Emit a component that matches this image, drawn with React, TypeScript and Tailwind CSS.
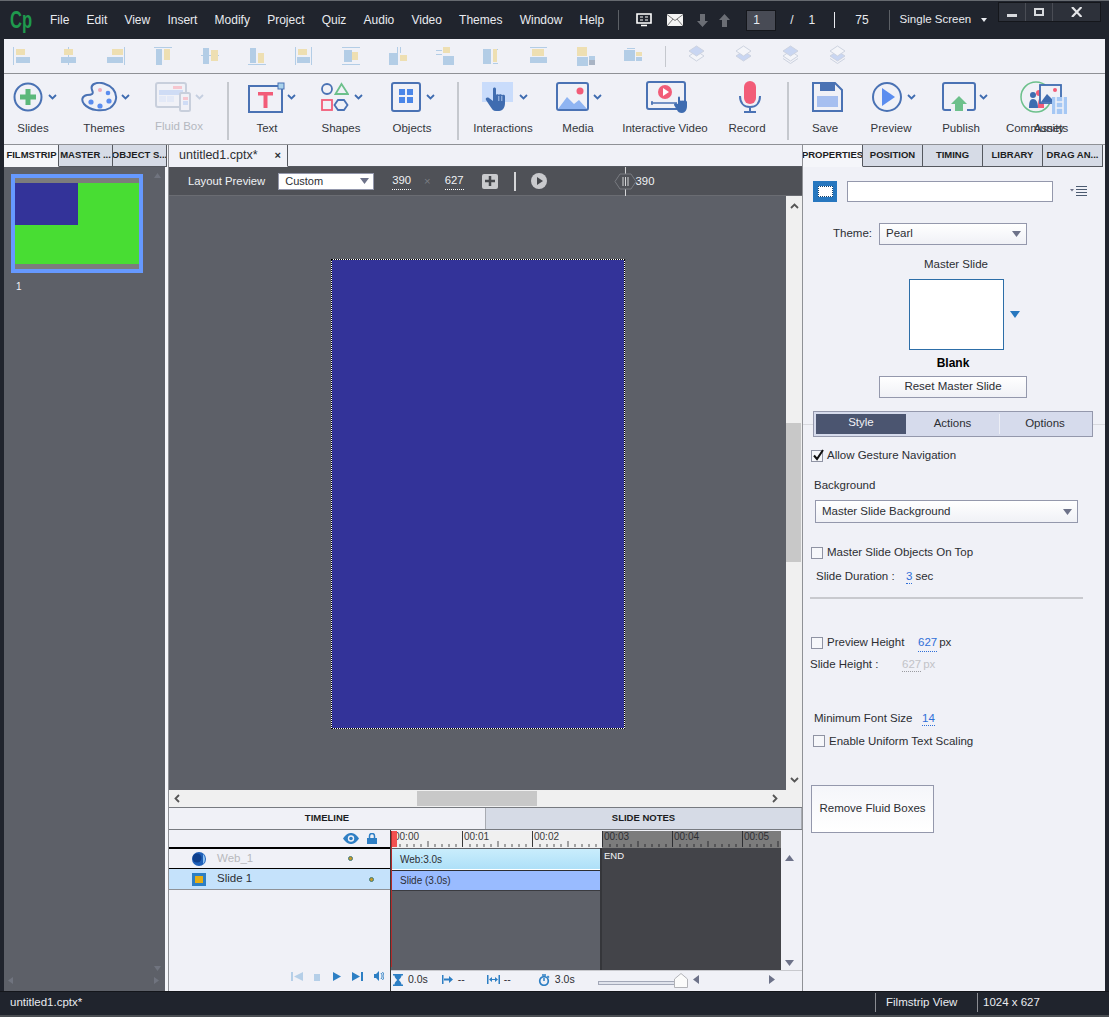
import { ReactNode } from 'react';

const Chevron = ({ faded }: { faded?: boolean }) => (
  <svg width="9" height="6" viewBox="0 0 9 6" className="ml-[6px]">
    <path d="M1 1l3.500 3.500L8 1" fill="none" stroke={faded ? '#c5cfe0' : '#3f6cb0'} strokeWidth="1.8" />
  </svg>
);

const ToolItem = ({ label, width, pad, gap, children, chevron, faded }: { label: string; width: string; pad: string; gap?: string; children: ReactNode; chevron?: boolean; faded?: boolean }) => (
  <div className={`${width} flex flex-col shrink-0`}>
    <div className={`${pad} h-[32px] flex items-center`}>
      {children}
      {chevron && <div className={gap}><Chevron faded={faded} /></div>}
    </div>
    <div className={faded ? 'text-center text-[11.5px] leading-[14px] mt-[6px] text-[#b4b8c0]' : 'text-center text-[11.5px] leading-[14px] mt-[8px] text-[#33363c]'}>{label}</div>
  </div>
);

const Sep = ({ className }: { className: string }) => <div className={`w-[2px] h-[58px] bg-[#c5c8ce] shrink-0 ${className}`} />;

type R = [number, number, number, number, string];
const B = '#b3cde6';
const Y = '#eedfb2';
const alignIcons: R[][] = [
  [[0, 0, 1, 18, B], [3, 2, 9, 6, Y], [3, 10, 14, 6, B]],
  [[8, 0, 1, 18, B], [4, 2, 9, 6, Y], [1, 10, 15, 6, B]],
  [[17, 0, 1, 18, B], [5, 2, 11, 6, Y], [0, 10, 16, 6, B]],
  [[0, 0, 18, 1, B], [2, 2, 6, 16, B], [10, 2, 6, 11, Y]],
  [[0, 8, 18, 1, B], [2, 1, 6, 16, B], [10, 3, 7, 11, Y]],
  [[0, 17, 18, 1, B], [2, 1, 6, 15, B], [10, 6, 6, 10, Y]],
  [[0, 0, 1, 18, B], [16, 0, 1, 18, B], [3, 2, 9, 6, Y], [2, 10, 13, 6, B]],
  [[0, 0, 18, 1, B], [0, 17, 18, 1, B], [2, 3, 8, 12, B], [10, 5, 6, 8, Y]],
  [[8, 0, 1, 6, B], [11, 0, 1, 6, B], [0, 6, 9, 12, B], [11, 8, 7, 6, Y]],
  [[0, 3, 6, 1, B], [0, 7, 6, 1, B], [7, 0, 7, 6, Y], [7, 9, 11, 9, B]],
  [[0, 2, 8, 15, B], [10, 2, 5, 1, B], [10, 2, 4, 13, Y], [10, 16, 5, 1, B]],
  [[2, 2, 12, 7, Y], [0, 10, 17, 6, B], [0, 0, 17, 1, B]],
  [[0, 0, 10, 9, Y], [0, 10, 11, 9, B], [12, 9, 6, 4, B], [12, 13, 6, 5, '#a9b4c4']],
  [[0, 3, 11, 11, B], [3, 1, 8, 1, B], [12, 5, 6, 4, Y], [12, 10, 6, 4, B]],
];

const AlignIcon = ({ rects }: { rects: R[] }) => (
  <svg width="18" height="19" viewBox="0 0 18 19">
    {rects.map((r, i) => (
      <rect key={i} x={r[0]} y={r[1]} width={r[2]} height={r[3]} fill={r[4]} />
    ))}
  </svg>
);

const LayerIcon = ({ kind }: { kind: number }) => {
  const fillA = kind === 0 || kind === 2 ? '#c9d6f2' : '#f4f5f9';
  const fillB = kind === 1 || kind === 3 ? '#c9d6f2' : '#f4f5f9';
  return (
    <svg width="17" height="22" viewBox="0 0 17 22">
      {kind > 1 && <path d="M1 13.500l7.500 5 7.500-5" fill="none" stroke="#cdd3e0" />}
      <path d="M8.500 6L16 11l-7.500 5L1 11z" fill={fillB} stroke="#cdd3e0" />
      <path d="M8.500 1L16 6l-7.500 5L1 6z" fill={fillA} stroke="#cdd3e0" />
    </svg>
  );
};

const Check = ({ checked }: { checked?: boolean }) => (
  <div className="relative w-[12px] h-[12px] border border-[#8f93a3] bg-[#f6f7fa] shrink-0">
    {checked && (
      <svg width="14" height="13" viewBox="0 0 14 13" className="absolute left-0 top-[-2px]">
        <path d="M2 6.500l3 3.500 6-9" fill="none" stroke="#111" strokeWidth="2" />
      </svg>
    )}
  </div>
);

const SelectBox = ({ label, className }: { label: string; className: string }) => (
  <div className={`flex items-center justify-between border border-[#9498ac] bg-gradient-to-b from-white to-[#f0f1f6] ${className}`}>
    <span className="pl-[6px] text-[11.5px] text-[#2c2e33]">{label}</span>
    <svg width="9" height="6" viewBox="0 0 9 6" className="mr-[5px]"><path d="M0 0h9L4.500 6z" fill="#6d7289" /></svg>
  </div>
);

const Tab = ({ label, width, active }: { label: string; width: string; active?: boolean }) => (
  <div className={`${width} h-[22px] shrink-0 flex items-center justify-center overflow-hidden whitespace-nowrap text-[9.500px] font-bold border-r border-[#55585f] border-b ${active ? 'bg-[#f5f6fa] text-[#1c1d22] border-b-[#f5f6fa]' : 'bg-[#d6dbe6] text-[#1c1d22] border-b-[#55585f]'}`}>
    {label}
  </div>
);

const Link = ({ children, grey }: { children: ReactNode; grey?: boolean }) => (
  <span className={`border-b border-dotted ${grey ? 'text-[#c2c3c8] border-[#9a9ba0]' : 'text-[#2f6fd8] border-[#2f6fd8]'}`}>{children}</span>
);

const RulerCell = ({ label, dark }: { label: string; dark?: boolean }) => (
  <div className={`relative w-[70px] h-[16px] shrink-0 border-l ${dark ? 'border-[#2e2f33] text-[#2e2f33]' : 'border-[#3a3a3a] text-[#3a3a3a]'}`}>
    <span className="absolute left-[1px] top-[-1px] text-[10px] leading-[13px]">{label}</span>
    <svg width="70" height="16" viewBox="0 0 70 16" className="absolute left-0 top-0">
      {[7, 14, 21, 28, 35, 42, 49, 56, 63].map((x) => (
        <line key={x} x1={x} x2={x} y1={x === 35 ? 10 : 13} y2="16" stroke={dark ? '#2e2f33' : '#555'} />
      ))}
    </svg>
  </div>
);

const App = () => {
  const menus = ['File', 'Edit', 'View', 'Insert', 'Modify', 'Project', 'Quiz', 'Audio', 'Video', 'Themes', 'Window', 'Help'];

  return (
    <div className="relative w-[1109px] h-[1017px] overflow-hidden bg-[#20242d] flex flex-col font-['Liberation_Sans',sans-serif]">
      {/* Title bar */}
      <div className="h-[39px] shrink-0 flex items-center border-t border-[#666a70] text-[#e9ebf0] text-[12px]">
        <span className="ml-[10px] w-[40px] text-[23px] leading-[23px] font-bold text-[#1f9a4d] shrink-0 origin-left scale-x-[0.72]">Cp</span>
        <div className="flex gap-[17.200px]">
          {menus.map((m) => (
            <span key={m}>{m}</span>
          ))}
        </div>
        <div className="ml-[14px] w-px h-[20px] bg-[#5c6066]" />
        <svg width="16" height="14" viewBox="0 0 16 14" className="ml-[17px]">
          <path d="M1 1h14v9H1zM5 12.500h6" fill="none" stroke="#fff" strokeWidth="1.600" />
          <path d="M4 4h3M4 7h3M9 4h3M9 7h3" stroke="#fff" />
        </svg>
        <svg width="16" height="12" viewBox="0 0 16 12" className="ml-[15px]">
          <path d="M0 0h16v12H0z" fill="#f4f4f4" />
          <path d="M0 .5l8 6 8-6M0 12l6-7M16 12l-6-7" fill="none" stroke="#777" />
        </svg>
        <svg width="11" height="13" viewBox="0 0 11 13" className="ml-[14px]"><path d="M3 0h5v7h3l-5.500 6L0 7h3z" fill="#6b6e75" /></svg>
        <svg width="11" height="13" viewBox="0 0 11 13" className="ml-[11px]"><path d="M3 13h5V6h3L5.500 0 0 6h3z" fill="#6b6e75" /></svg>
        <div className="ml-[16px] w-[30px] h-[21px] bg-[#484b55] border border-[#15171c] flex items-center pl-[6px]">1</div>
        <span className="ml-[14px]">/</span>
        <span className="ml-[15px]">1</span>
        <div className="ml-[19px] w-px h-[16px] bg-[#e9ebf0]" />
        <span className="ml-[20px]">75</span>
        <div className="ml-[20px] w-px h-[20px] bg-[#5c6066]" />
        <span className="ml-[10px] text-[11.500px]">Single Screen</span>
        <svg width="6" height="4" viewBox="0 0 6 4" className="ml-[10px]"><path d="M0 0h6L3 4z" fill="#e9ebf0" /></svg>
      </div>

      {/* Window buttons */}
      <div className="absolute left-[998px] top-[2px] w-[103px] h-[20px] flex bg-[#2d313a] border border-[#14161b]">
        <div className="w-[27px] border-r border-[#4a4d55] flex items-center justify-center">
          <div className="w-[10px] h-[3px] mt-[6px] bg-[#d8dade]" />
        </div>
        <div className="w-[27px] border-r border-[#4a4d55] flex items-center justify-center">
          <div className="w-[10px] h-[8px] border-2 border-[#d8dade]" />
        </div>
        <div className="flex-1 flex items-center justify-center">
          <svg width="11" height="10" viewBox="0 0 11 10"><path d="M1 0l9.500 10M10.500 0L1 10" stroke="#e4e5e8" strokeWidth="2.200" /></svg>
        </div>
      </div>

      <div className="flex-1 min-h-0 mx-[4px] flex flex-col bg-[#f0f1f7]">
        {/* Align toolbar */}
        <div className="h-[35px] shrink-0 flex items-center border-b border-[#8f9196] pl-[9px]">
          {alignIcons.map((rects, i) => (
            <div key={i} className="w-[47px] shrink-0 flex">
              <AlignIcon rects={rects} />
            </div>
          ))}
          <div className="w-px h-[21px] bg-[#c5c8ce] ml-[-6px] mr-[22px]" />
          {[0, 1, 2, 3].map((k) => (
            <div key={k} className="w-[47px] shrink-0 flex">
              <LayerIcon kind={k} />
            </div>
          ))}
        </div>

        {/* Main toolbar */}
        <div className="relative h-[71px] shrink-0 flex items-start pt-[7px] border-b border-[#8f9196]">
          <ToolItem label="Slides" width="w-[58px]" pad="pl-[9px]" chevron gap="ml-[-1px]">
            <svg width="30" height="30" viewBox="0 0 30 30">
              <circle cx="15" cy="15" r="13.500" fill="none" stroke="#4a72b4" strokeWidth="2" />
              <path d="M15 7v16M7 15h16" stroke="#5cb87a" strokeWidth="5" />
            </svg>
          </ToolItem>
          <ToolItem label="Themes" width="w-[84px]" pad="pl-[19px]" chevron gap="ml-[-3px]">
            <svg width="37" height="30" viewBox="0 0 37 30">
              <path d="M13 2c6-3 14 0 19 5 5 6 4 14-3 19-7 4-20 3-26-4-3-4-2-8 3-9 5 0 7-1 5-5-1-3 0-5 2-6z" fill="none" stroke="#4a72b4" strokeWidth="2" />
              <circle cx="10" cy="20" r="2.600" fill="#5b8def" />
              <circle cx="19" cy="24" r="2.600" fill="#5b8def" />
              <circle cx="28" cy="19" r="2.600" fill="#5b8def" />
              <circle cx="27" cy="11" r="2.300" fill="#5b8def" />
              <circle cx="19" cy="8" r="2" fill="#f0a8b8" />
            </svg>
          </ToolItem>
          <ToolItem label="Fluid Box" width="w-[66px]" pad="pl-[9px]" chevron faded gap="ml-[-2px]">
            <svg width="36" height="30" viewBox="0 0 36 30">
              <rect x="1" y="1" width="30" height="24" rx="2" fill="none" stroke="#c8cfdc" strokeWidth="2" />
              <rect x="4" y="8" width="24" height="5" fill="#cfdcf5" />
              <rect x="18" y="4" width="9" height="3" fill="#f6c6cf" />
              <rect x="4" y="14" width="7" height="6" fill="#e3e9f7" />
              <rect x="12" y="14" width="7" height="6" fill="#e3e9f7" />
              <rect x="25" y="11" width="10" height="18" rx="1.500" fill="#f0f1f7" stroke="#c8cfdc" strokeWidth="2" />
              <rect x="28" y="15" width="5" height="3" fill="#f6c6cf" />
              <rect x="28" y="19" width="5" height="4" fill="#cfdcf5" />
            </svg>
          </ToolItem>
          <Sep className="ml-[15px] mt-[1px]" />
          <ToolItem label="Text" width="w-[76px]" pad="pl-[19px]" chevron gap="ml-[-4px]">
            <svg width="37" height="31" viewBox="0 0 37 31">
              <rect x="1" y="4" width="33" height="26" fill="none" stroke="#4a72b4" strokeWidth="2" />
              <path d="M10 10h15v3.500h-5.500V26h-4V13.500H10z" fill="#f25c78" />
              <rect x="30" y="1" width="6" height="6" fill="#a9d2ec" stroke="#4a72b4" />
            </svg>
          </ToolItem>
          <ToolItem label="Shapes" width="w-[72px]" pad="pl-[16px]" chevron gap="ml-[-1px]">
            <svg width="28" height="30" viewBox="0 0 28 30">
              <circle cx="6" cy="7" r="5" fill="none" stroke="#4a72b4" strokeWidth="1.800" />
              <path d="M14.500 12L20.500 2 27 12z" fill="none" stroke="#6cc08b" strokeWidth="1.800" />
              <rect x="1" y="18" width="10" height="10" fill="none" stroke="#f25c78" strokeWidth="1.800" />
              <path d="M17 18h6l3.500 5-3.500 5h-6l-3.500-5z" fill="none" stroke="#4a72b4" strokeWidth="1.800" />
            </svg>
          </ToolItem>
          <ToolItem label="Objects" width="w-[70px]" pad="pl-[14px]" chevron gap="ml-[-1px]">
            <svg width="30" height="30" viewBox="0 0 30 30">
              <rect x="1" y="1" width="28" height="28" rx="2" fill="none" stroke="#4a72b4" strokeWidth="2" />
              <rect x="8" y="7" width="6" height="6" fill="#4a86e8" />
              <rect x="16" y="7" width="6" height="6" fill="#4a86e8" />
              <rect x="8" y="15" width="6" height="6" fill="#4a86e8" />
              <rect x="16" y="15" width="6" height="6" fill="#4a86e8" />
            </svg>
          </ToolItem>
          <Sep className="ml-[10px] mt-[1px]" />
          <ToolItem label="Interactions" width="w-[88px]" pad="pl-[23px]" chevron>
            <svg width="31" height="30" viewBox="0 0 31 30">
              <rect x="0" y="0" width="31" height="20" fill="#c9dcfb" />
              <path d="M11 7c0-2 3-2 3 0v6c0-1 3-1 3 0 0-1 3-1 3 .5 0-1 3-1 3 .5v7c0 4-2 8-6 8h-3c-3 0-4-2-6-5l-4-6c-1-2 1-3 3-2l4 3z" fill="#3f6cb0" />
              <path d="M16.800 14v5M19.800 14v5" stroke="#c9dcfb" strokeWidth="0.800" />
            </svg>
          </ToolItem>
          <ToolItem label="Media" width="w-[62px]" pad="pl-[9px]" chevron gap="ml-[-2px]">
            <svg width="33" height="30" viewBox="0 0 33 30">
              <rect x="1" y="1" width="31" height="27" rx="2" fill="none" stroke="#4a72b4" strokeWidth="2" />
              <path d="M2 27l9-12 7 7 5-4 8 9z" fill="#8fb4f2" />
              <circle cx="24" cy="9" r="3.500" fill="#f25c78" />
            </svg>
          </ToolItem>
          <ToolItem label="Interactive Video" width="w-[112px]" pad="pl-[37px]">
            <svg width="43" height="32" viewBox="0 0 43 32">
              <rect x="1" y="1" width="38" height="27" rx="2" fill="none" stroke="#4a72b4" strokeWidth="2" />
              <circle cx="19" cy="11" r="7" fill="#f25c78" />
              <path d="M17 7l6 4-6 4z" fill="#fff" />
              <path d="M5 22h26M6 20v4" stroke="#4a72b4" strokeWidth="1.500" />
              <path d="M32 17c0-2 2-2 2 0v3c1-1 2 0 2 0 1-1 2 0 2 0 1-1 3 0 3 1v4c0 4-2 7-5 7s-4-1-5-3l-3-5c0-2 2-2 4-1z" fill="#3f6cb0" />
            </svg>
          </ToolItem>
          <ToolItem label="Record" width="w-[52px]" pad="pl-[18px]">
            <svg width="22" height="32" viewBox="0 0 22 32">
              <rect x="5" y="0" width="12" height="23" rx="6" fill="#f25c78" />
              <path d="M1 15c0 7 4 11 10 11s10-4 10-11M11 26v5M5 31h12" fill="none" stroke="#4a72b4" strokeWidth="2" />
            </svg>
          </ToolItem>
          <Sep className="ml-[14px] mt-[1px]" />
          <ToolItem label="Save" width="w-[72px]" pad="pl-[23px]">
            <svg width="31" height="30" viewBox="0 0 31 30">
              <path d="M1 1h22l7 7v21H1z" fill="none" stroke="#4a72b4" strokeWidth="2" />
              <rect x="8" y="1" width="15" height="8" fill="#4a72b4" />
              <rect x="5" y="14" width="21" height="11" fill="#a6bff0" />
            </svg>
          </ToolItem>
          <ToolItem label="Preview" width="w-[60px]" pad="pl-[10px]" chevron gap="ml-[-2px]">
            <svg width="32" height="30" viewBox="0 0 32 30">
              <circle cx="16" cy="15" r="14" fill="none" stroke="#4a72b4" strokeWidth="2" />
              <path d="M11 6l13 9-13 9z" fill="#5b8def" />
            </svg>
          </ToolItem>
          <ToolItem label="Publish" width="w-[80px]" pad="pl-[21px]" chevron gap="ml-[-3px]">
            <svg width="34" height="30" viewBox="0 0 34 30">
              <path d="M9 28H3a2 2 0 0 1-2-2V3a2 2 0 0 1 2-2h28a2 2 0 0 1 2 2v23a2 2 0 0 1-2 2h-6" fill="none" stroke="#4a72b4" strokeWidth="2" />
              <path d="M17 14l8 8h-4v7h-8v-7H9z" fill="#6cc08b" />
            </svg>
          </ToolItem>
          <ToolItem label="Community" width="w-[68px]" pad="pl-[19px]">
            <svg width="33" height="32" viewBox="0 0 33 32">
              <circle cx="16" cy="16" r="15" fill="none" stroke="#6cc08b" strokeWidth="1.500" />
              <circle cx="19" cy="12" r="3" fill="#f25c78" />
              <circle cx="13" cy="14" r="3" fill="#3f6cb0" />
              <path d="M9 27c0-6 1-9 4-9s5 3 5 9z" fill="#3f6cb0" />
              <path d="M18 27c0-5 0-10 3-10s3 5 3 10z" fill="#f25c78" />
            </svg>
          </ToolItem>
          {/* Assets sits on top of Community in the reference */}
          <div className="absolute left-[1029px] top-[7px] w-[36px]">
            <svg width="29" height="31" viewBox="0 0 29 31" className="ml-[6px] mt-[3px]">
              <rect x="1" y="1" width="21" height="18" fill="#f0f1f7" stroke="#3f6cb0" strokeWidth="1.800" />
              <path d="M2 18l6-8 5 5 3-2 5 5z" fill="#3f6cb0" />
              <circle cx="16" cy="6" r="2" fill="#f25c78" />
              <rect x="13" y="13" width="15" height="17" fill="#a6c8f4" />
              <path d="M17 13v17M24 13v17M17 18h7M17 24h7" stroke="#f0f1f7" strokeWidth="1.500" />
            </svg>
          </div>
          <div className="absolute left-[1029px] top-[47px] w-[36px] text-center text-[11.500px] leading-[14px] text-[#33363c]">Assets</div>
        </div>

        {/* Main columns */}
        <div className="flex-1 min-h-0 flex">
          {/* Filmstrip */}
          <div className="w-[164px] shrink-0 flex flex-col bg-[#f5f6fa]">
            <div className="flex pl-[1px]">
              <Tab label="FILMSTRIP" width="w-[54px]" active />
              <Tab label="MASTER ..." width="w-[54px]" />
              <Tab label="OBJECT S..." width="w-[54px]" />
            </div>
            <div className="relative flex-1 w-[161px] bg-[#5d6068] pt-[7px] pl-[7px]">
              <div className="w-[132px] h-[99px] border-4 border-[#6699ff] bg-[#48dd33] flex flex-col justify-between">
                <div className="h-[5px] bg-[#7c7c7c]" />
                <div className="absolute left-[11px] top-[16px] w-[63px] h-[42px] bg-[#333399]" />
                <div className="h-[5px] bg-[#7c7c7c]" />
              </div>
              <div className="mt-[8px] pl-[5px] text-[10px] leading-[12px] text-[#f0f1f5]">1</div>
              <svg width="7" height="5" viewBox="0 0 7 5" className="absolute left-[150px] top-[6px]"><path d="M0 5h7L3.500 0z" fill="#70747f" /></svg>
              <svg width="7" height="5" viewBox="0 0 7 5" className="absolute left-[150px] bottom-[20px]"><path d="M0 0h7L3.500 5z" fill="#70747f" /></svg>
              <svg width="5" height="7" viewBox="0 0 5 7" className="absolute left-[4px] bottom-[7px]"><path d="M5 0v7L0 3.500z" fill="#70747f" /></svg>
              <svg width="5" height="7" viewBox="0 0 5 7" className="absolute left-[150px] bottom-[7px]"><path d="M0 0v7l5-3.500z" fill="#70747f" /></svg>
            </div>
          </div>

          {/* Stage */}
          <div className="w-[634px] shrink-0 flex flex-col border-l border-[#8f9196]">
            <div className="h-[22px] shrink-0 flex">
              <div className="w-[119px] border-r border-b border-r-[#55585f] border-b-[#f0f1f7] flex items-center pl-[10px] pr-[6px] justify-between text-[12.500px] text-[#2c2e33]">
                <span>untitled1.cptx*</span>
                <span className="text-[11px] font-bold">×</span>
              </div>
              <div className="flex-1 border-b border-[#55585f]" />
            </div>
            <div className="h-[29px] shrink-0 bg-[#4f5157] relative flex items-center text-[11.300px] text-[#f0f1f5] border-b border-[#6a6c72]">
              <span className="ml-[19px]">Layout Preview</span>
              <div className="ml-[13px] w-[96px] h-[17px] flex items-center justify-between border border-[#9498ac] bg-white text-[#2c2e33]">
                <span className="pl-[6px] text-[11px]">Custom</span>
                <svg width="9" height="6" viewBox="0 0 9 6" className="mr-[4px]"><path d="M0 0h9L4.500 6z" fill="#6d7289" /></svg>
              </div>
              <span className="ml-[18px] border-b border-dotted border-white">390</span>
              <span className="ml-[13px] text-[#7b7d83]">×</span>
              <span className="ml-[14px] border-b border-dotted border-white">627</span>
              <div className="ml-[18px] w-[16px] h-[15px] rounded-[2px] bg-[#c9cacd] flex items-center justify-center">
                <svg width="10" height="10" viewBox="0 0 10 10"><path d="M5 0v10M0 5h10" stroke="#45474c" strokeWidth="2.500" /></svg>
              </div>
              <div className="ml-[16px] w-[2px] h-[19px] bg-[#d5d6d8]" />
              <svg width="16" height="16" viewBox="0 0 16 16" className="ml-[15px]">
                <circle cx="8" cy="8" r="8" fill="#c9cacd" />
                <path d="M6 4l6 4-6 4z" fill="#45474c" />
              </svg>
              <svg width="23" height="29" viewBox="0 0 23 29" className="ml-[67px]">
                <path d="M11.500 0v29" stroke="#d5d6d8" />
                <path d="M6 7h11l5 7.500-5 7.500H6L1 14.500z" fill="#4f5157" stroke="#797b81" />
                <path d="M9 10v9M11.500 10v9M14 10v9" stroke="#d5d6d8" />
              </svg>
              <span className="ml-[-1px]">390</span>
            </div>

            {/* Canvas and its scrollbars */}
            <div className="flex-1 min-h-0 flex">
              <div className="flex-1 bg-[#5d6068] pt-[63px] pl-[162px]">
                <div className="w-[294px] h-[470px] bg-white border border-dotted border-black">
                  <div className="w-full h-full bg-[#333399]" />
                </div>
              </div>
              <div className="relative w-[16px] shrink-0 bg-[#f0f0f0] flex flex-col items-center justify-between py-[7px]">
                <svg width="9" height="6" viewBox="0 0 9 6"><path d="M1 5l3.500-3.500L8 5" fill="none" stroke="#555" strokeWidth="1.800" /></svg>
                <div className="absolute left-0 right-px top-[227px] h-[139px] bg-[#c8c8c8]" />
                <svg width="9" height="6" viewBox="0 0 9 6"><path d="M1 1l3.500 3.500L8 1" fill="none" stroke="#555" strokeWidth="1.800" /></svg>
              </div>
            </div>
            <div className="relative h-[17px] shrink-0 bg-[#f0f0f0] flex items-center pl-[5px] pr-[24px] justify-between">
              <svg width="6" height="9" viewBox="0 0 6 9"><path d="M5 1L1.500 4.500 5 8" fill="none" stroke="#555" strokeWidth="1.800" /></svg>
              <div className="absolute left-[248px] top-px bottom-px w-[120px] bg-[#c8c8c8]" />
              <svg width="6" height="9" viewBox="0 0 6 9"><path d="M1 1l3.500 3.500L1 8" fill="none" stroke="#555" strokeWidth="1.800" /></svg>
            </div>

            {/* Timeline */}
            <div className="h-[23px] shrink-0 flex text-[9.500px] font-bold text-[#1c1d22] border-t border-b border-[#777a80]">
              <div className="w-[316px] flex items-center justify-center">TIMELINE</div>
              <div className="flex-1 flex items-center justify-center bg-[#d6dbe6] border-l border-r border-[#a8abb2]">SLIDE NOTES</div>
            </div>
            <div className="h-[161px] shrink-0 flex">
              <div className="w-[221px] shrink-0 flex flex-col">
                <div className="h-[19px] shrink-0 flex items-center justify-end pr-[13px] border-b-2 border-black">
                  <svg width="16" height="11" viewBox="0 0 16 11" className="mr-[8px]">
                    <path d="M0 5.500C3 1 6 0 8 0s5 1 8 5.500C13 10 10 11 8 11s-5-1-8-5.500z" fill="#2f7fc4" />
                    <circle cx="8" cy="5.500" r="3.200" fill="#f0f1f7" />
                    <circle cx="8" cy="5.500" r="1.800" fill="#2f7fc4" />
                  </svg>
                  <svg width="10" height="11" viewBox="0 0 10 11">
                    <path d="M2.500 5V3a2.500 2.500 0 0 1 5 0v2" fill="none" stroke="#2f7fc4" strokeWidth="1.500" />
                    <rect x="0" y="5" width="10" height="6" fill="#2f7fc4" />
                  </svg>
                </div>
                <div className="h-[20px] shrink-0 flex items-center border-b border-black pl-[23px] text-[11.500px] text-[#b8b9bd]">
                  <svg width="14" height="14" viewBox="0 0 14 14">
                    <circle cx="7" cy="7" r="7" fill="#1e5fb8" />
                    <circle cx="5" cy="6" r="4.500" fill="#0e3f8c" />
                    <path d="M11 2a7 7 0 0 1 0 10z" fill="#8fc3f2" />
                  </svg>
                  <span className="ml-[11px]">Web_1</span>
                  <div className="ml-[95px] w-[5px] h-[5px] rounded-full bg-[#c79a26] border border-[#3f7a7a]" />
                </div>
                <div className="h-[21px] shrink-0 flex items-center border-b border-[#8f9196] bg-[#c5e2fb] pl-[23px] text-[11.500px] text-[#2c2e33]">
                  <div className="w-[14px] h-[13px] border-[3px] border-[#2d7fc4] bg-[#e6ad12]" />
                  <span className="ml-[11px]">Slide 1</span>
                  <div className="ml-[117px] w-[5px] h-[5px] rounded-full bg-[#c79a26] border border-[#3f7a7a]" />
                </div>
                <div className="flex-1 flex items-end justify-end pr-[6px] pb-[10px] gap-[11px]">
                  <svg width="12" height="9" viewBox="0 0 12 9"><path d="M0 0h2v9H0zM12 0v9L3 4.500z" fill="#b5cfe8" /></svg>
                  <div className="w-[6px] h-[7px] bg-[#b5cfe8]" />
                  <svg width="8" height="9" viewBox="0 0 8 9" className="ml-[2px]"><path d="M0 0v9l8-4.500z" fill="#2d7fc4" /></svg>
                  <svg width="11" height="9" viewBox="0 0 11 9"><path d="M9 0h2v9H9zM0 0v9l8-4.500z" fill="#2d7fc4" /></svg>
                  <svg width="10" height="10" viewBox="0 0 10 10"><path d="M0 3h2l3-3v10L2 7H0z" fill="#2d7fc4" /><path d="M7 2c1.500 2 1.500 4 0 6M8.500 1c2 3 2 5 0 8" fill="none" stroke="#2d7fc4" /></svg>
                </div>
              </div>

              <div className="flex-1 min-w-0 flex flex-col border-l border-[#3a3a3a]">
                <div className="relative flex-1 min-h-0 flex">
                  <div className="relative w-[390px] shrink-0 flex flex-col">
                    <div className="h-[17px] shrink-0 flex pl-px mt-[1px] overflow-hidden">
                      <div className="flex bg-[#f0f0f0]">
                        <RulerCell label="00:00" />
                        <RulerCell label="00:01" />
                        <RulerCell label="00:02" />
                      </div>
                      <div className="flex bg-[#7c7c7c]">
                        <RulerCell label="00:03" dark />
                        <RulerCell label="00:04" dark />
                        <RulerCell label="00:05" dark />
                      </div>
                    </div>
                    <div className="flex-1 min-h-0 flex">
                      <div className="w-[211px] shrink-0 flex flex-col bg-[#5d6068] border-r-2 border-[#35363a]">
                        <div className="h-[21px] mt-[1px] shrink-0 flex items-center pl-[9px] text-[10px] text-[#2c2e33] bg-gradient-to-b from-[#c9edfc] to-[#aee0f8] border-b border-white">Web:3.0s</div>
                        <div className="h-[21px] shrink-0 flex items-center pl-[9px] text-[10px] text-[#2c2e33] bg-[#99bbff] border-t border-b border-t-[#2c2e33] border-b-[#3a3b40]">Slide (3.0s)</div>
                      </div>
                      <div className="flex-1 bg-[#434449] pl-[2px] pt-[2px] text-[9.500px] leading-[12px] text-[#f4f5f7]">END</div>
                    </div>
                    <div className="absolute left-0 top-[1px] w-[6px] h-[16px] bg-[#f25050]" />
                    <div className="absolute left-0 top-[1px] bottom-[3px] w-px bg-[#b52b2b]" />
                  </div>
                  <div className="flex-1 flex flex-col items-center justify-between pt-[25px] pb-[4px] pr-[4px] bg-[#f0f1f7]">
                    <svg width="9" height="6" viewBox="0 0 9 6"><path d="M0 6h9L4.500 0z" fill="#6d7289" /></svg>
                    <svg width="9" height="6" viewBox="0 0 9 6"><path d="M0 0h9L4.500 6z" fill="#6d7289" /></svg>
                  </div>
                </div>
                <div className="h-[21px] shrink-0 flex items-center pb-[3px] border-t border-[#c8c9ce] text-[10.500px] text-[#2c2e33]">
                  <svg width="10" height="12" viewBox="0 0 10 12" className="ml-[2px]">
                    <path d="M0 0h10v1.500H8.500C8.500 4 6.500 5 5.800 6c.7 1 2.700 2 2.700 4.500H10V12H0v-1.500h1.500C1.500 8 3.500 7 4.200 6c-.7-1-2.700-2-2.700-4.500H0z" fill="#2d7fc4" />
                  </svg>
                  <span className="ml-[5px]">0.0s</span>
                  <svg width="11" height="9" viewBox="0 0 11 9" className="ml-[14px]"><path d="M0 0h1.500v9H0zM2 3.500h5V1l4 3.500L7 8V5.500H2z" fill="#2d7fc4" /></svg>
                  <span className="ml-[5px]">--</span>
                  <svg width="13" height="9" viewBox="0 0 13 9" className="ml-[22px]"><path d="M0 0h1.500v9H0zM11.500 0H13v9h-1.500zM2 4.500L5 2v2h3V2l3 2.500L8 7V5H5v2z" fill="#2d7fc4" /></svg>
                  <span className="ml-[4px]">--</span>
                  <svg width="12" height="12" viewBox="0 0 12 12" className="ml-[27px]">
                    <circle cx="6" cy="7" r="4.300" fill="none" stroke="#2d7fc4" strokeWidth="1.700" />
                    <path d="M6 7V4M4 1h4M9.500 2l1.500 1.500" stroke="#2d7fc4" strokeWidth="1.500" />
                  </svg>
                  <span className="ml-[5px]">3.0s</span>
                  <div className="relative ml-[23px] w-[82px] h-[4px] mt-[6px] bg-[#e0e3ec] border border-[#a3a8b8]">
                    <svg width="14" height="15" viewBox="0 0 14 15" className="absolute right-[-9px] top-[-9px]"><path d="M.5 6L7 .5 13.500 6v8.500H.5z" fill="#fbfbfb" stroke="#b2b3b8" /></svg>
                  </div>
                  <svg width="6" height="9" viewBox="0 0 6 9" className="ml-[13px]"><path d="M6 0v9L0 4.500z" fill="#6d7289" /></svg>
                  <svg width="6" height="9" viewBox="0 0 6 9" className="ml-[70px]"><path d="M0 0v9l6-4.500z" fill="#6d7289" /></svg>
                </div>
              </div>
            </div>
          </div>

          {/* Properties */}
          <div className="flex-1 min-w-0 flex flex-col border-l border-[#8f9196] text-[11.500px] text-[#2c2e33]">
            <div className="flex">
              <Tab label="PROPERTIES" width="w-[60px]" active />
              <Tab label="POSITION" width="w-[60px]" />
              <Tab label="TIMING" width="w-[60px]" />
              <Tab label="LIBRARY" width="w-[60px]" />
              <Tab label="DRAG AN..." width="w-[60px]" />
            </div>
            <div className="relative flex-1 pl-[7px]">
              <div className="flex items-center mt-[14px]">
                <div className="ml-[3px] w-[24px] h-[21px] bg-[#2777bf] flex items-center justify-center">
                  <div className="w-[15px] h-[11px] bg-white border border-dotted border-[#14406b]" />
                </div>
                <div className="ml-[10px] w-[206px] h-[21px] bg-white border border-[#9498ac]" />
                <svg width="17" height="11" viewBox="0 0 17 11" className="ml-[17px]">
                  <path d="M0 3h4L2 5.500z" fill="#6d7289" />
                  <path d="M6 .5h11M6 3.500h11M6 6.500h11M6 9.500h11" stroke="#4b5a70" />
                </svg>
              </div>
              <div className="flex items-center mt-[21px]">
                <span className="ml-[23px] w-[46px]">Theme:</span>
                <SelectBox label="Pearl" className="w-[148px] h-[22px]" />
              </div>
              <div className="mt-[12px] ml-[106px] w-[80px] text-center leading-[14px]">Master Slide</div>
              <div className="flex items-center mt-[8px] ml-[99px]">
                <div className="w-[95px] h-[71px] bg-white border border-[#2d6ea8]" />
                <svg width="10" height="7" viewBox="0 0 10 7" className="ml-[6px]"><path d="M0 0h10L5 7z" fill="#2777bf" /></svg>
              </div>
              <div className="mt-[6px] ml-[93px] w-[100px] text-center text-[12px] leading-[14px] font-bold text-black">Blank</div>
              <div className="mt-[6px] ml-[69px] w-[148px] h-[22px] flex items-center justify-center border border-[#9498ac] bg-gradient-to-b from-white to-[#f0f1f6]">Reset Master Slide</div>

              <div className="relative mt-[13px]">
                <div className="absolute left-[-7px] right-0 top-[13px] h-px bg-[#d8d9de]" />
                <div className="relative ml-[3px] w-[280px] h-[26px] flex border border-[#9498ac] bg-[#d6dbec] p-[2px]">
                  <div className="w-[90px] bg-[#4b5570] text-[#f0f1f5] flex items-center justify-center pb-[2px]">Style</div>
                  <div className="w-[94px] border-r border-[#eceef5] flex items-center justify-center">Actions</div>
                  <div className="flex-1 flex items-center justify-center">Options</div>
                </div>
              </div>

              <div className="flex items-center mt-[10px] ml-px">
                <Check checked />
                <span className="ml-[4px]">Allow Gesture Navigation</span>
              </div>
              <div className="mt-[14px] ml-[4px] leading-[14px]">Background</div>
              <SelectBox label="Master Slide Background" className="mt-[8px] ml-[5px] w-[263px] h-[23px]" />
              <div className="flex items-center mt-[21px] ml-px">
                <Check />
                <span className="ml-[4px]">Master Slide Objects On Top</span>
              </div>
              <div className="flex mt-[7px] ml-[6px] leading-[14px]">
                <span className="w-[90px]">Slide Duration :</span>
                <Link>3</Link>
                <span className="ml-[3px]">sec</span>
              </div>
              <div className="mt-[13px] w-[273px] h-[2px] bg-[#c8c9ce]" />
              <div className="flex items-center mt-[35px] ml-px">
                <Check />
                <span className="ml-[4px] w-[91px]">Preview Height</span>
                <Link>627</Link>
                <span className="ml-[2px]">px</span>
              </div>
              <div className="flex mt-[5px] leading-[14px]">
                <span className="w-[92px]">Slide Height :</span>
                <Link grey>627</Link>
                <span className="ml-[2px] text-[#c2c3c8]">px</span>
              </div>
              <div className="flex mt-[39px] ml-[4px] leading-[14px]">
                <span className="w-[108px]">Minimum Font Size</span>
                <Link>14</Link>
              </div>
              <div className="flex items-center mt-[7px] ml-[3px]">
                <Check />
                <span className="ml-[4px]">Enable Uniform Text Scaling</span>
              </div>
              <div className="mt-[35px] ml-px w-[123px] h-[48px] flex items-center justify-center border border-[#9498ac] bg-gradient-to-b from-[#f5f6fa] to-white">Remove Fluid Boxes</div>
            </div>
          </div>
        </div>
      </div>

      {/* Status bar */}
      <div className="h-[26px] shrink-0 flex items-start pt-[1px] text-[11.500px] text-[#e9ebf0] border-t border-[#14161b] border-b-2 border-b-[#4a4d52]">
        <span className="ml-[10px] mt-[1px] w-[865px]">untitled1.cptx*</span>
        <div className="w-px h-[19px] bg-[#8a8c92]" />
        <span className="ml-[10px] mt-[1px] w-[91px]">Filmstrip View</span>
        <div className="w-px h-[19px] bg-[#8a8c92]" />
        <span className="ml-[5px] mt-[1px]">1024 x 627</span>
      </div>
    </div>
  );
};

export default App;
